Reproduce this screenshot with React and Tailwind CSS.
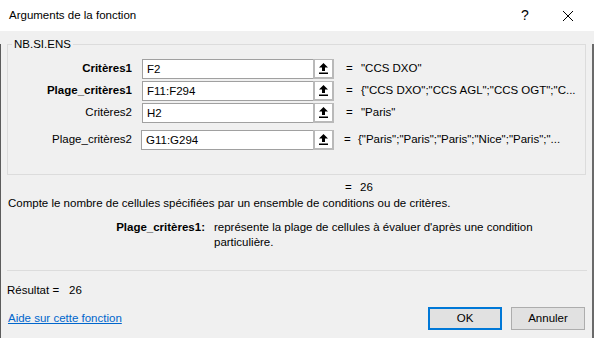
import React from 'react';

const rows = [
  { label: 'Critères1', bold: true, cell: 'F2', value: '"CCS DXO"' },
  { label: 'Plage_critères1', bold: true, cell: 'F11:F294', value: '{"CCS DXO";"CCS AGL";"CCS OGT";"C...' },
  { label: 'Critères2', cell: 'H2', value: '"Paris"' },
  { label: 'Plage_critères2', cell: 'G11:G294', value: '{"Paris";"Paris";"Paris";"Nice";"Paris";"...', last: true },
];

const CollapseIcon = () => (
  <svg width="9" height="11" viewBox="0 0 9 11" fill="#000">
    <polygon points="4.5,0 9,4.5 6,4.5 6,8 3,8 3,4.5 0,4.5" />
    <rect x="0" y="9.5" width="9" height="1.5" />
  </svg>
);

const ArgRow = ({ label, bold, cell, value, last }) => (
  <div className={last ? 'flex items-center h-[20px] mt-[5px]' : 'flex items-center h-[20px]'}>
    <div className={`w-[124px] text-right whitespace-nowrap ${bold ? 'font-bold' : ''}`}>{label}</div>
    <div className={last ? 'flex ml-[9px]' : 'flex ml-[10px]'}>
      <div className={last ? 'w-[172px] h-[20px] bg-white border border-[#a0a0a0] border-r-0 pl-[4px] leading-[18px]' : 'w-[171px] h-[20px] bg-white border border-[#a0a0a0] border-r-0 pl-[4px] leading-[18px]'}>
        {cell}
      </div>
      <div className="w-[21px] h-[20px] border-2 border-t border-[#b9b9b9] bg-white flex items-center justify-center">
        <CollapseIcon />
      </div>
    </div>
    <span className={last ? 'ml-[10px] w-[14px]' : 'ml-[12px] w-[15px]'}>=</span>
    <span className="whitespace-nowrap">{value}</span>
  </div>
);

export default function App() {
  return (
    <div className="w-[594px] h-[338px] bg-[#f0f0f0] text-[11.5px] text-black font-['Liberation_Sans',Arial,sans-serif] overflow-hidden">
      <div className="h-[31px] bg-white flex items-center pl-[9px]">
        <span>Arguments de la fonction</span>
        <span className="ml-auto w-[20px] text-center text-[14px]">?</span>
        <svg className="ml-[28px] mr-[21px]" width="10" height="10" viewBox="0 0 10 10" stroke="#000" strokeWidth="1">
          <line x1="0" y1="0" x2="10" y2="10" />
          <line x1="10" y1="0" x2="0" y2="10" />
        </svg>
      </div>

      <div className="h-[307px] shadow-[inset_1px_0_0_#5c5c5c,inset_-2px_0_0_#6a6a6a]">
        <div className="relative mx-[7px] mr-[8px] mt-[13px] h-[131px] border border-[#dcdcdc] pt-[14px] flex flex-col gap-[2px]">
          <span className="absolute -top-[9px] left-[4px] px-[2px] bg-[#f0f0f0] leading-[16px]">NB.SI.ENS</span>
          {rows.map((r) => (
            <ArgRow key={r.label} {...r} />
          ))}
        </div>

        <div className="px-[8px]">
          <div className="mt-[4px] h-[16px] leading-[16px] pl-[337px] flex">
            <span className="w-[15px]">=</span>
            <span>26</span>
          </div>
          <div className="h-[16px] leading-[16px] whitespace-nowrap">
            Compte le nombre de cellules spécifiées par un ensemble de conditions ou de critères.
          </div>
          <div className="mt-[9px] flex leading-[15px]">
            <div className="w-[197px] text-right font-bold">Plage_critères1:</div>
            <div className="ml-[9px]">
              représente la plage de cellules à évaluer d'après une condition
              <br />
              particulière.
            </div>
          </div>
        </div>

        <div className="mt-[20px] ml-[7px] w-[580px] border-t border-[#dcdcdc]" />

        <div className="mt-[11px] pl-[7px] h-[16px] leading-[16px] flex">
          <span className="w-[62px]">Résultat =</span>
          <span>26</span>
        </div>

        <div className="mt-[9px] flex items-center pl-[8px] pr-[9px]">
          <a href="#" className="text-[#0066cc] underline">Aide sur cette fonction</a>
          <button className="ml-auto w-[74px] h-[23px] bg-[#e1e1e1] border-2 border-[#0078d7]">OK</button>
          <button className="ml-[9px] w-[74px] h-[23px] bg-[#e1e1e1] border border-[#adadad]">Annuler</button>
        </div>
      </div>
    </div>
  );
}
